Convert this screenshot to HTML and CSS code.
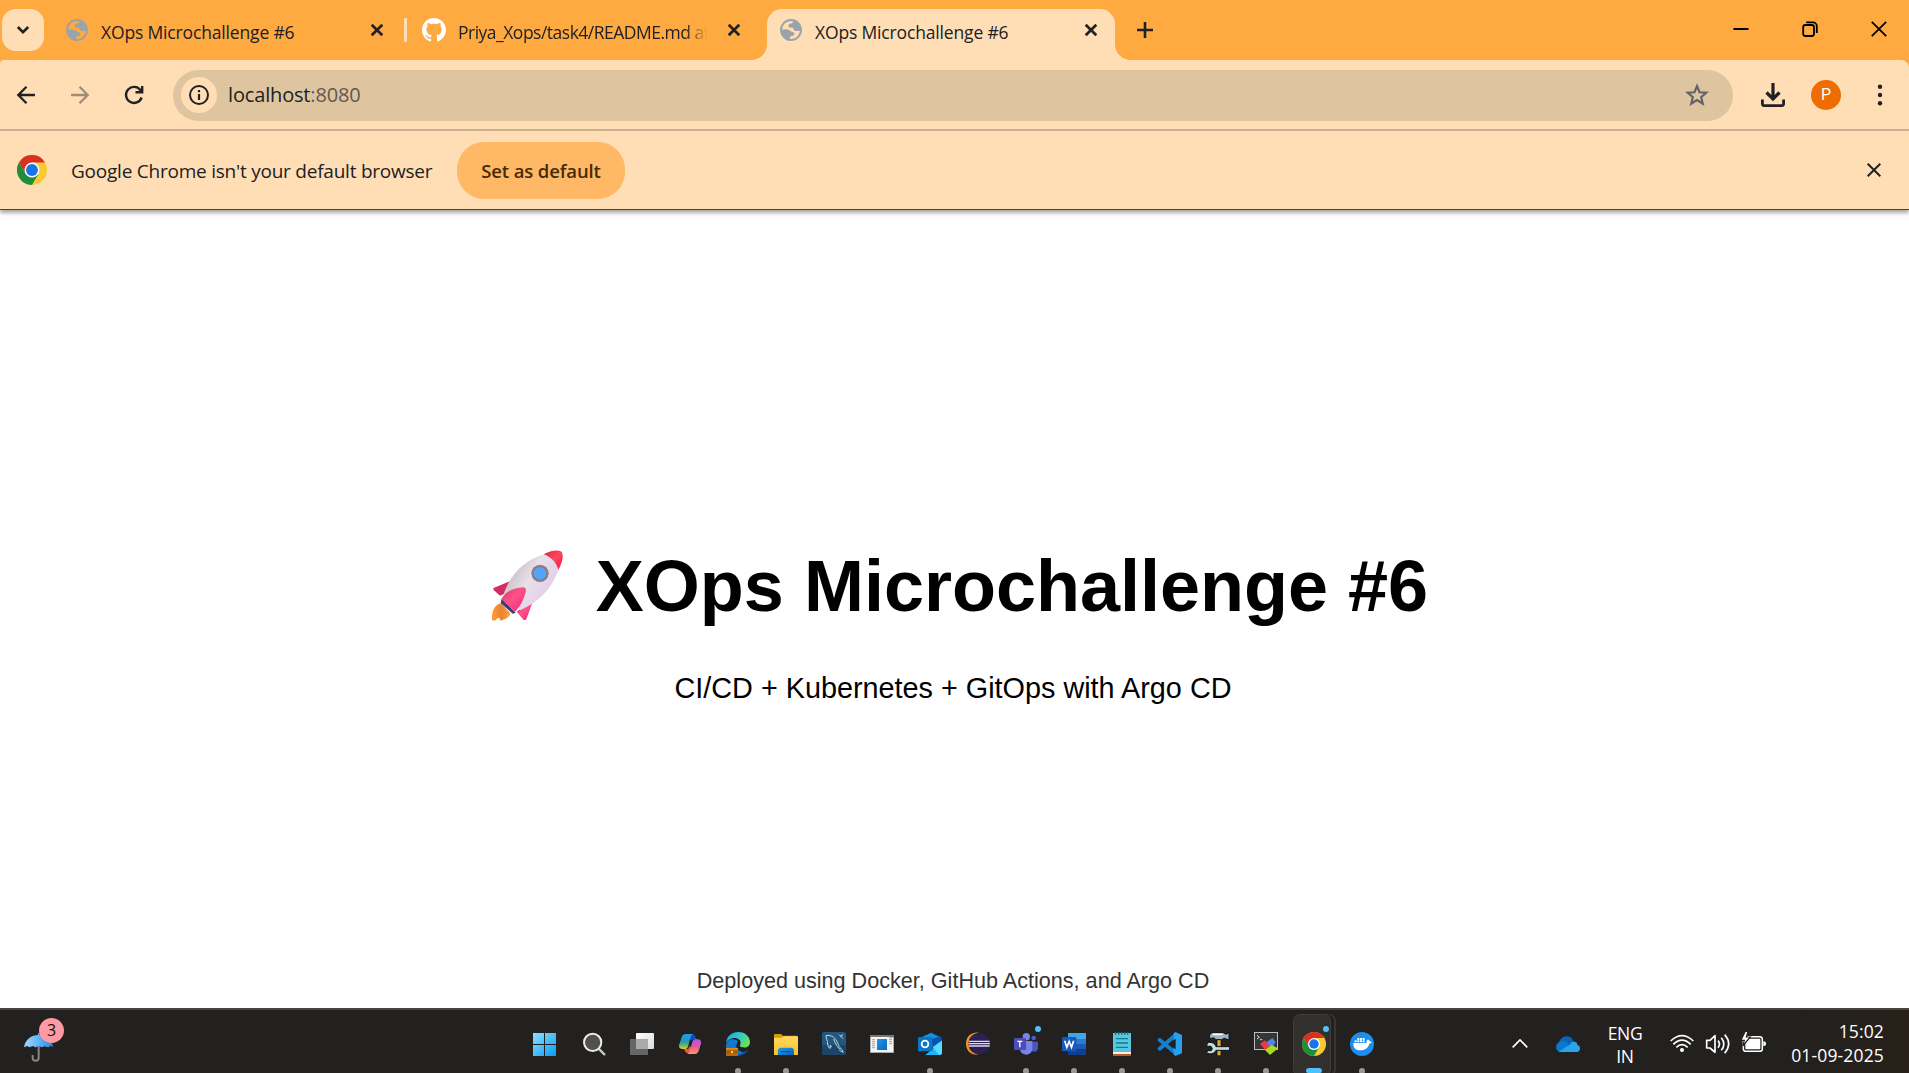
FILE: index.html
```html
<!DOCTYPE html>
<html lang="en">
<head>
<meta charset="utf-8">
<title>XOps Microchallenge #6</title>
<link rel="stylesheet" href="styles.css">
</head>
<body>
<svg class="defs" aria-hidden="true">
  <defs>
    <symbol id="globe" viewBox="117 54 72 72">
      <circle cx="153" cy="90" r="30" fill="none" stroke="#9aa3aa" stroke-width="5.5"/>
      <path fill="#9aa3aa" d="M161 61C160 69 156 71 148 72C144 74 145 82 149 83C155 82 158 82 160 86C162 90 165 93 171 93L184 92A31 31 0 0 0 161 61ZM122 89L139 88C146 88 149 94 155 95C162 95 165 101 162 105C159 109 151 107 150 112V122A32 32 0 0 1 122 89Z"/>
    </symbol>
    <symbol id="close" viewBox="0 0 24 24"><path d="M6.7 6.7L17.3 17.3M17.3 6.7L6.7 17.3" fill="none" stroke="#202124" stroke-width="2.7"/></symbol>
    <symbol id="chrome" viewBox="0 0 72 72">
      <circle cx="36" cy="36" r="36" fill="#fbc934"/>
      <path fill="#d93025" d="M4.8 18A36 36 0 0 1 67.2 18H36L20.4 45Z"/>
      <path fill="#1e8e3e" d="M4.8 18A36 36 0 0 0 36 72L51.6 45L36 54L20.4 45Z"/>
      <circle cx="36" cy="36" r="18" fill="#fff"/>
      <circle cx="36" cy="36" r="14.3" fill="#1a73e8"/>
    </symbol>
    <linearGradient id="win" x1="0" y1="0" x2="1" y2="1"><stop stop-color="#8be0ff"/><stop offset="1" stop-color="#0a9bf5"/></linearGradient>
    <linearGradient id="paper" x1="0" y1="0" x2="1" y2="1"><stop stop-color="#fff"/><stop offset="1" stop-color="#d8dadd"/></linearGradient>
    <linearGradient id="copA" x1="0" y1="0" x2="0" y2="1"><stop stop-color="#1b9df0"/><stop offset=".5" stop-color="#2599b8"/><stop offset=".75" stop-color="#62b55d"/><stop offset="1" stop-color="#f4cf20"/></linearGradient>
    <linearGradient id="copB" x1="0" y1="0" x2="0" y2="1"><stop stop-color="#a957f0"/><stop offset=".5" stop-color="#e9579b"/><stop offset="1" stop-color="#ff9b55"/></linearGradient>
    <linearGradient id="edge" x1="0" y1="0" x2="1" y2=".5"><stop stop-color="#2098dc"/><stop offset=".5" stop-color="#2bc5d6"/><stop offset="1" stop-color="#65e25a"/></linearGradient>
    <linearGradient id="folder" x1="0" y1="0" x2="0" y2="1"><stop stop-color="#ffda5c"/><stop offset="1" stop-color="#f7bf2b"/></linearGradient>
    <linearGradient id="blue" x1="0" y1="0" x2="1" y2="1"><stop stop-color="#1b9ae8"/><stop offset="1" stop-color="#0b66bd"/></linearGradient>
    <linearGradient id="brolly" x1="0" y1="0" x2="1" y2="0"><stop stop-color="#a5d5fb"/><stop offset=".5" stop-color="#62b4f6"/><stop offset="1" stop-color="#2088e4"/></linearGradient>
    <linearGradient id="hull" x1="0" y1=".2" x2="1" y2=".8"><stop stop-color="#b9b2b6"/><stop offset=".45" stop-color="#e9e0ea"/><stop offset="1" stop-color="#dfc8ea"/></linearGradient>
    <linearGradient id="fin" x1="0" y1="0" x2="1" y2="1"><stop stop-color="#d93466"/><stop offset=".45" stop-color="#ff5288"/><stop offset="1" stop-color="#f3257b"/></linearGradient>
    <linearGradient id="nose" x1="0" y1="0" x2="1" y2="1"><stop stop-color="#df1f3f"/><stop offset=".5" stop-color="#ff4661"/><stop offset="1" stop-color="#ed1540"/></linearGradient>
    <linearGradient id="flame" x1="0" y1="0" x2="1" y2="0"><stop stop-color="#ff9a3c"/><stop offset=".5" stop-color="#e9852d"/><stop offset="1" stop-color="#ffa04b"/></linearGradient>
  </defs>
</svg>

<header class="tabstrip">
  <div class="tab-search"><svg width="16" height="16" viewBox="0 0 16 16"><path d="M2.8 5L8 10.2L13.2 5" fill="none" stroke="#202124" stroke-width="2.6"/></svg></div>
  <div class="tab">
    <svg class="ico24"><use href="#globe"/></svg><span class="title">XOps Microchallenge #6</span><svg class="ico24"><use href="#close"/></svg>
  </div>
  <div class="sep"></div>
  <div class="tab">
    <svg class="ico24" viewBox="0 0 16 16"><path fill="#fff" d="M8 0C3.58 0 0 3.58 0 8c0 3.54 2.29 6.53 5.47 7.59.4.07.55-.17.55-.38 0-.19-.01-.82-.01-1.49-2.01.37-2.53-.49-2.69-.94-.09-.23-.48-.94-.82-1.13-.28-.15-.68-.52-.01-.53.63-.01 1.08.58 1.23.82.72 1.21 1.87.87 2.33.66.07-.52.28-.87.51-1.07-1.78-.2-3.64-.89-3.64-3.95 0-.87.31-1.59.82-2.15-.08-.2-.36-1.02.08-2.12 0 0 .67-.21 2.2.82.64-.18 1.32-.27 2-.27s1.36.09 2 .27c1.53-1.04 2.2-.82 2.2-.82.44 1.1.16 1.92.08 2.12.51.56.82 1.27.82 2.15 0 3.07-1.87 3.75-3.65 3.95.29.25.54.73.54 1.48 0 1.07-.01 1.93-.01 2.2 0 .21.15.46.55.38A8.01 8.01 0 0 0 16 8c0-4.42-3.58-8-8-8z"/></svg><span class="title fade">Priya_Xops/task4/README.md at</span><svg class="ico24"><use href="#close"/></svg>
  </div>
  <div class="tab active">
    <svg class="ico24"><use href="#globe"/></svg><span class="title">XOps Microchallenge #6</span><svg class="ico24"><use href="#close"/></svg>
  </div>
  <svg class="newtab" width="16" height="16" viewBox="0 0 16 16"><path d="M8 0V16M0 8H16" stroke="#202124" stroke-width="2.6"/></svg>
  <div class="window-controls">
    <svg width="16" height="16" viewBox="0 0 16 16"><path d="M.5 8H15.5" stroke="#000" stroke-width="2"/></svg>
    <svg width="16" height="16" viewBox="0 0 16 16" fill="none" stroke="#000" stroke-width="1.8"><rect x="1.2" y="4" width="10.8" height="11" rx="2.2"/><path d="M4.2 1.4H11A3.8 3.8 0 0 1 14.8 5.2V12"/></svg>
    <svg width="16" height="16" viewBox="0 0 16 16"><path d="M.8 .8L15.2 15.2M15.2 .8L.8 15.2" stroke="#000" stroke-width="1.8"/></svg>
  </div>
</header>

<nav class="toolbar">
  <div class="nav-buttons">
    <svg width="20" height="20" viewBox="0 0 20 20" fill="none" stroke="#202124" stroke-width="2.3"><path d="M19 10H3M10.5 1.8L2.3 10L10.5 18.2"/></svg>
    <svg width="20" height="20" viewBox="0 0 20 20" fill="none" stroke="#9f8c77" stroke-width="2.3"><path d="M1 10H17M9.500 1.8L17.700 10L9.500 18.2"/></svg>
    <svg width="20" height="20" viewBox="0 0 20 20" fill="none" stroke="#202124" stroke-width="2.4"><path d="M17.600 12.500A8 8 0 1 1 16.500 5.200L18 7M18.200 1V7.300H11.500"/></svg>
  </div>
  <div class="omnibox">
    <div class="site-info"><svg width="20" height="20" viewBox="0 0 20 20"><circle cx="10" cy="10" r="9" fill="none" stroke="#202124" stroke-width="2"/><path d="M10 9V15M10 5V7.200" stroke="#202124" stroke-width="2.200"/></svg></div>
    <div class="url">localhost<span>:8080</span></div>
    <svg width="24" height="24" viewBox="0 0 24 24"><path d="M12 3L14.500 9.200L21.300 9.700L16.100 14.100L17.800 20.700L12 17.100L6.200 20.700L7.900 14.100L2.700 9.700L9.500 9.200Z" fill="none" stroke="#5f6368" stroke-width="2.100"/></svg>
  </div>
  <svg class="download" width="24" height="24" viewBox="0 0 24 24" fill="none" stroke="#202124" stroke-width="2.800"><path d="M12 0V16M5.500 9.500L12 16L18.500 9.500" stroke-width="3.200"/><path d="M1.400 16.500V21A1.700 1.700 0 0 0 3 22.600H21A1.700 1.700 0 0 0 22.600 21V16.500"/></svg>
  <div class="avatar">P</div>
  <svg class="menu" width="6" height="24" viewBox="0 0 6 24" fill="#202124"><circle cx="3" cy="3.800" r="2.200"/><circle cx="3" cy="12" r="2.200"/><circle cx="3" cy="20.200" r="2.200"/></svg>
</nav>

<div class="infobar">
  <svg class="logo"><use href="#chrome"/></svg>
  <span class="info-text">Google Chrome isn't your default browser</span>
  <span class="default-btn">Set as default</span>
  <svg class="dismiss" width="14" height="14" viewBox="0 0 14 14"><path d="M.7 .7L13.300 13.300M13.300 .7L.7 13.300" stroke="#202124" stroke-width="2"/></svg>
</div>

<main class="page">
  <h1><svg class="rocket" viewBox="27 50 294 240">
    <path fill="url(#flame)" d="M94 219C76 222 64 240 66 269L74 271L83 263L90 264L91 271C107 267 119 261 121 249Z"/>
    <path fill="#3c3c74" d="M95 205L137 247L128 250L92 218Z"/>
    <path fill="#d32e62" d="M119 153L69 174L72 180L90 196L104 190Z"/>
    <path fill="url(#fin)" d="M187 218L168 269L161 269L140 244L155 232Z"/>
    <path fill="url(#hull)" d="M223 72C165 90 125 126 101 191L126 210L151 240C208 214 245 178 266 117C262 96 246 79 223 72Z"/>
    <path fill="url(#nose)" d="M221 72C240 62 260 57 275 64C282 76 277 97 265 118C258 95 243 80 221 72Z"/>
    <circle cx="210" cy="129" r="26" fill="#8a7c8d"/><circle cx="210" cy="129" r="18.500" fill="#52a5fb"/>
    <path fill="url(#fin)" d="M94 206C106 184 128 174 160 171C167 172 169 177 167 185C161 209 151 228 135 245Z"/>
  </svg> XOps Microchallenge #6</h1>
  <p class="sub">CI/CD + Kubernetes + GitOps with Argo CD</p>
  <footer>Deployed using Docker, GitHub Actions, and Argo CD</footer>
</main>

<div class="taskbar">
  <div class="weather">
    <svg width="32" height="32" viewBox="69 219 96 96"><path d="M116 258V293A9 9 0 0 1 98 293V285" fill="none" stroke="#858585" stroke-width="6"/><path d="M116 219V228" stroke="#62b4f6" stroke-width="4"/><path fill="url(#brolly)" d="M72 262C76 238 94 225 116 225C139 225 154 239 160 262L152 257L145 262L133 259L126 262L116 258L107 262L98 258L89 262L81 258Z"/></svg>
    <span class="badge">3</span>
  </div>
  <div class="apps">
    <div class="app"><svg viewBox="72 96 72 72"><g fill="url(#win)"><path d="M69 99H102V132H69ZM105 99H138V132H105ZM69 135H102V168H69ZM105 135H138V168H105Z"/></g></svg></div>
    <div class="app"><svg viewBox="216 96 72 72"><path d="M268 148L283 163" stroke="#c8c8c8" stroke-width="7" stroke-linecap="round"/><circle cx="248" cy="127" r="26" fill="#51504f" stroke="#ececec" stroke-width="6"/></svg></div>
    <div class="app"><svg viewBox="360 96 72 72"><rect x="360" y="117" width="54" height="48" rx="3" fill="#666"/><rect x="378" y="99" width="54" height="48" rx="3" fill="url(#paper)"/><rect x="378" y="117" width="36" height="30" fill="#aaa"/></svg></div>
    <div class="app"><svg viewBox="504 96 72 72"><path fill="#1246bd" d="M532 102H548Q554 103 557 112L562 121H542Z"/><path fill="url(#copA)" d="M527 102H549Q543 105 541 114L534 140Q532 147 525 147H516Q506 146 507 136L516 109Q519 102 527 102Z"/><path fill="#e55a39" d="M522 147H534Q536 144 538 139L548 145L534 161Q529 160 525 154Z"/><path fill="url(#copB)" d="M556 118H565Q575 120 573 131L565 155Q562 162 554 162H533Q538 157 540 149L547 126Q549 118 556 118Z"/></svg></div>
    <div class="app run"><svg viewBox="648 96 72 72"><path fill="#0c4f91" d="M684 126C674 139 684 157 700 156L716 149C706 165 688 171 669 166C650 158 646 139 652 126Z"/><path fill="#1179d0" d="M649 133C650 117 674 112 684 125L677 136C678 150 690 155 700 157C678 176 641 158 649 133Z"/><path fill="url(#edge)" d="M648 130C650 108 665 96 685 96C707 96 720 111 720 126C720 139 710 144 697 142C690 141 688 138 691 133C695 119 682 112 671 114C658 116 650 122 648 130Z"/><rect x="648" y="144" width="36" height="24" fill="#b86710"/><path d="M648 144H684V149H648Z" fill="#df8c17"/><path d="M648 156H684" stroke="#754009" stroke-width="2"/><rect x="663" y="153" width="6" height="6" fill="#ffd34d"/></svg></div>
    <div class="app run"><svg viewBox="792 96 72 72"><path fill="#db9800" d="M792 105Q792 102 795 102H813L819 107H861V120H792Z"/><path fill="url(#folder)" d="M792 113H815L822 109H864V165H792Z"/><path fill="url(#blue)" d="M804 165V151Q805 143 813 143H844Q852 144 852 151V165Z"/><path d="M813 155H843" stroke="#075091" stroke-width="3"/></svg></div>
    <div class="app"><svg viewBox="66 96 72 72"><rect x="66" y="96" width="72" height="69" rx="6" fill="#22577f"/><path d="M66 135H138V159Q138 165 132 165H72Q66 165 66 159Z" fill="#1b4568"/><path d="M78 107C95 104 107 113 113 130C117 144 125 144 130 157L118 151M78 107C78 118 83 120 83 132C84 140 87 145 91 145L90 136L96 141M101 117C107 132 111 143 121 148M118 104L124 111L130 116M121 109L129 104" fill="none" stroke="#d9e5ed" stroke-width="2.600"/></svg></div>
    <div class="app"><svg viewBox="210 96 72 72"><rect x="211.500" y="106.500" width="69" height="51" fill="#f5f5f5" stroke="#aaa" stroke-width="3"/><path d="M210 108H282" stroke="#777" stroke-width="6"/><rect x="231" y="117" width="30" height="33" fill="url(#blue)"/><path d="M216 119H225M216 125H225M216 131H225M216 137H225M216 143H225M267 119H276M267 125H276M267 131H276M267 113H278" stroke="#777" stroke-width="2"/></svg></div>
    <div class="app run"><svg viewBox="354 96 72 72"><path fill="#1591dd" d="M366 111L393 98L420 111V140H366Z"/><path fill="#0b4faf" d="M386 120L423 108L426 120L399 140Z"/><path fill="#20b6f6" d="M426 120V160Q425 165 420 165H376L400 145Z"/><path fill="#57dcff" d="M398 142L426 122V160Q424 165 418 165Z"/><rect x="354" y="111" width="43" height="43" rx="3" fill="#0875c9"/><circle cx="375" cy="132" r="10" fill="none" stroke="#fff" stroke-width="5.500"/></svg></div>
    <div class="app"><svg viewBox="498 96 72 72"><path d="M536 98C511 96 498 112 498 131C498 151 512 166 536 164C520 158 508 148 508 131C508 114 520 102 536 98Z" fill="#f5921e"/><circle cx="537" cy="131" r="32" fill="#2d2055"/><path d="M506 124H569M505 131H570M506 138H569" stroke="#ddd9e8" stroke-width="4"/></svg></div>
    <div class="app run"><svg viewBox="642 96 72 72"><circle cx="679" cy="110" r="11" fill="#7b83eb"/><circle cx="701" cy="114" r="7" fill="#5059c9"/><path fill="#4b53bc" d="M690 125H714V146Q711 157 697 155Z"/><path fill="#7b83eb" d="M660 123H697V148Q694 164 678 164Q663 162 660 150Z"/><rect x="642" y="114" width="36" height="36" rx="3" fill="#4b4fb5"/><path d="M652 124H667M659.500 124V142" stroke="#fff" stroke-width="4"/></svg><i class="notice"></i></div>
    <div class="app run"><svg viewBox="786 96 72 72"><path fill="#41a5ee" d="M804 99H858V117H804Z"/><path fill="#2b7cd3" d="M804 117H858V132H804Z"/><path fill="#185abd" d="M804 132H858V148H804Z"/><path fill="#103f91" d="M804 148H858V165H804Z"/><rect x="786" y="111" width="43" height="43" rx="3" fill="#1859b8"/><path d="M794 122L800.500 142L807.500 124L814.500 142L821 122" fill="none" stroke="#fff" stroke-width="5"/></svg></div>
    <div class="app run"><svg viewBox="60 96 72 72"><rect x="69" y="99" width="54" height="64" fill="#58c7de"/><path d="M69 156H123V163H69Z" fill="#f4eee8"/><path d="M69 162H123V168H69Z" fill="#b95a2d"/><path d="M77 96V104M86 96V104M95 96V104M104 96V104M113 96V104" stroke="#106d83" stroke-width="4"/><path d="M78 116H114M78 129H114M78 142H114" stroke="#137993" stroke-width="4"/></svg></div>
    <div class="app run"><svg viewBox="204 96 72 72"><path d="M209 146L257 105M209 120L257 159" stroke="#147fca" stroke-width="12" stroke-linecap="round"/><path fill="#28a0ec" d="M256 96L276 105V160L256 168L251 163V100Z"/><path fill="#22211f" d="M257 116L237 132L257 148Z"/></svg></div>
    <div class="app run"><svg viewBox="348 96 72 72"><path d="M387 116V168" stroke="#111" stroke-width="17"/><path d="M387 119V166" stroke="#d8a735" stroke-width="10"/><path d="M358 105L366 98H400L408 103L417 98V120L403 115L395 119H378L371 113L360 117Z" fill="#9fb3c0" stroke="#111" stroke-width="3"/><path d="M352 129C362 124 374 129 378 140H419V151H378C373 161 360 165 350 158L353 152H364L367 146L363 139H350Z" fill="#c3dde4" stroke="#111" stroke-width="3"/><path d="M368 103H398" stroke="#fff" stroke-width="5"/></svg></div>
    <div class="app run"><svg viewBox="492 96 72 72"><rect x="493.500" y="97.500" width="69" height="51" fill="#343536" stroke="#bbb" stroke-width="3"/><path d="M501 106L508 112L501 117M510 119H517" fill="none" stroke="#fff" stroke-width="2.500"/><path fill="#e93945" d="M510 131L525 121L536 133L547 140L534 154L523 147Z"/><path fill="#4c87e8" d="M530 126L547 114L557 126L550 138L536 137Z"/><path fill="#aadb20" d="M525 150L545 135L564 145L540 165Z"/></svg></div>
    <div class="app current"><svg><use href="#chrome"/></svg><i class="notice"></i></div>
    <div class="app run"><svg viewBox="780 96 72 72"><circle cx="816" cy="132" r="36" fill="#1d8eee"/><path fill="#fff" d="M790 129H830C828 124 831 121 834 118C837 121 839 125 844 126C847 126 845 130 838 131C834 145 824 151 810 151C796 151 789 142 790 129ZM794 121H800V127H794ZM802 121H808V127H802ZM810 121H816V127H810ZM818 121H824V127H818ZM802 114H808V120H802ZM810 114H816V120H810ZM818 114H824V120H818Z"/></svg></div>
  </div>
  <div class="tray">
    <svg class="chev" width="24" height="24" viewBox="54 96 72 72"><path d="M68 142L90 120L112 142" fill="none" stroke="#fff" stroke-width="5"/></svg>
    <svg class="cloud" width="24" height="24" viewBox="198 96 72 72"><path fill="#0b62b8" d="M207 127C214 103 244 103 250 123L261 130L220 145Z"/><path fill="#0878d0" d="M212 156C193 155 194 127 213 125C220 121 228 124 233 130L249 156Z"/><path fill="#2aa5eb" d="M206 155L241 133C246 121 263 125 262 134C273 138 273 154 261 156H212Z"/></svg>
    <div class="lang">ENG<br>IN</div>
    <div class="status">
      <svg width="24" height="24" viewBox="540 96 72 72" fill="none" stroke="#fff" stroke-width="5"><path d="M542 123Q576 91 610 123M550 133Q576 108 602 133M559 142Q576 126 593 142"/><circle cx="576" cy="150" r="6" fill="#fff" stroke="none"/></svg>
      <svg width="24" height="24" viewBox="648 96 72 72" fill="none" stroke="#fff" stroke-width="5"><path d="M650 121H660L675 107V157L660 144H650Z" stroke-linejoin="round"/><path d="M684 122Q693 132 684 143M694 113Q709 132 694 151M704 104Q728 131 704 160"/></svg>
      <svg width="24" height="24" viewBox="756 96 72 72"><rect x="760" y="110" width="57" height="44" rx="8" fill="none" stroke="#fff" stroke-width="4.500"/><rect x="766" y="116" width="45" height="32" rx="3" fill="#fff"/><path d="M820 124Q828 124 828 131Q828 138 820 138Z" fill="#fff"/><path d="M766 94L753 121H763L758 138L781 111H769L774 94Z" fill="#fff" stroke="#22211f" stroke-width="3.500"/></svg>
    </div>
    <div class="clock">15:02<br>01-09-2025</div>
  </div>
</div>
</body>
</html>
```
FILE: styles.css
```css
* { box-sizing: border-box; }
body {
  margin: 0;
  width: 1909px;
  height: 1073px;
  overflow: hidden;
  display: flex;
  flex-direction: column;
  background: #ffaa40;
  color: #202124;
  font-family: "Open Sans", "Noto Sans", sans-serif;
}
svg { display: block; flex: none; overflow: visible; }
.defs { position: absolute; width: 0; height: 0; }
.ico24 { width: 24px; height: 24px; }

/* Tab strip */
.tabstrip { height: 60px; flex: none; display: flex; padding: 9px 0 0 2px; background: #ffaa40; }
.tab-search { width: 42px; height: 42px; margin-right: 9px; border-radius: 14px; background: #ffdeb5; display: flex; align-items: center; justify-content: center; }
.tab { width: 348px; height: 51px; padding: 0 12px 9px; display: flex; align-items: center; gap: 12px; }
.title { width: 252px; font-size: 17.5px; line-height: 24px; letter-spacing: -0.16px; white-space: nowrap; overflow: hidden; padding-top: 3px; }
.fade { letter-spacing: -0.5px; -webkit-mask-image: linear-gradient(90deg, #000 90%, transparent 99%); mask-image: linear-gradient(90deg, #000 90%, transparent 99%); }
.sep { width: 3px; height: 24px; margin: 9px 3px 0; background: #ffdeb5; border-radius: 1px; }
.active { position: relative; margin-left: 9px; background: #ffdeb5; border-radius: 15px 15px 0 0; }
.active::before, .active::after { content: ""; position: absolute; bottom: 0; width: 15px; height: 15px; }
.active::before { left: -15px; background: radial-gradient(circle at 0 0, transparent 14.5px, #ffdeb5 15px); }
.active::after { right: -15px; background: radial-gradient(circle at 100% 0, transparent 14.5px, #ffdeb5 15px); }
.newtab { margin: 13px 0 0 22px; }
.window-controls { margin-left: auto; padding: 12px 22px 0 0; display: flex; gap: 53px; }

/* Toolbar */
.toolbar { height: 71px; flex: none; display: flex; align-items: center; padding: 1px 26px 0 16px; border-bottom: 2px solid #ccb193; border-radius: 4px 8px 0 0; background: #ffdeb5; }
.nav-buttons { display: flex; gap: 34px; width: 157px; }
.omnibox { width: 1560px; height: 51px; border-radius: 26px; background: #dfc4a0; display: flex; align-items: center; padding: 0 24px 0 8px; }
.site-info { width: 36px; height: 36px; border-radius: 50%; background: #ffdeb5; display: flex; align-items: center; justify-content: center; }
.url { flex: 1; margin-left: 11px; font-size: 20px; letter-spacing: -0.16px; line-height: 28px; }
.url span { color: #5f5951; }
.download { margin-left: 28px; }
.avatar { width: 30px; height: 30px; margin-left: 26px; border-radius: 50%; background: #ef6c00; color: #fff; font: 16px/30px Roboto, sans-serif; text-align: center; }
.menu { margin-left: auto; }

/* Default browser notice */
.infobar { height: 79px; flex: none; display: flex; align-items: center; padding: 0 28px 0 17px; background: #ffdeb5; border-bottom: 1px solid #4b443d; position: relative; box-shadow: 0 3px 4px rgba(0,0,0,.35); }
.logo { width: 30px; height: 30px; }
.info-text { width: 386px; margin-left: 24px; font-size: 19px; letter-spacing: -0.23px; white-space: nowrap; padding-top: 2px; }
.default-btn { width: 168px; height: 57px; border-radius: 27px; background: #ffb866; color: #452b05; font-size: 18.500px; font-weight: 600; line-height: 58px; letter-spacing: -0.12px; text-align: center; }
.dismiss { margin-left: auto; }

/* Page */
.page { height: 798px; flex: none; padding-right: 3px; background: #fff; color: #000; text-align: center; font-family: "Liberation Sans", Arial, sans-serif; display: flex; flex-direction: column; align-items: center; }
.page h1 { margin: 335px 0 0; font-size: 72px; line-height: 83px; display: flex; align-items: center; white-space: nowrap; gap: 19px; }
.rocket { width: 98px; height: 80px; margin-left: 1px; }
.sub { margin: 43px 0 0; font-size: 28.800px; line-height: 34px; }
footer { margin-top: auto; padding-bottom: 14px; font-size: 21.600px; line-height: 26px; color: #333; }

/* Taskbar */
.taskbar { height: 65px; flex: none; border-top: 2px solid #444442; background: linear-gradient(90deg, #22211f 0 94%, #282019); color: #fff; display: flex; }
.weather { width: 522px; padding: 23px 0 0 23px; position: relative; }
.badge { position: absolute; left: 39px; top: 8px; width: 25px; height: 25px; border-radius: 50%; background: #ff99a4; color: #111; font-size: 16px; line-height: 24px; text-align: center; }
.apps { display: flex; }
.app { width: 48px; height: 63px; padding: 22px 12px 0; position: relative; }
.app svg { width: 24px; height: 24px; position: relative; }
.run::after { content: ""; position: absolute; left: 21px; bottom: -1px; width: 6px; height: 6px; border-radius: 50%; background: #9a9998; }
.notice { position: absolute; right: 9px; top: 16px; width: 6px; height: 6px; border-radius: 50%; background: #4cc2ff; }
.current::before { content: ""; position: absolute; left: 3px; top: 4px; width: 36px; height: 60px; border: 1px solid #403d3a; border-radius: 7px; background: #322f2c; box-shadow: 4px 0 0 -1px #22211f, 5px 0 0 #383532; }
.current::after { content: ""; position: absolute; left: 16px; bottom: 0; width: 16px; height: 5px; border-radius: 3px 3px 2px 2px; background: #4cc2ff; }
.tray { flex: 1; display: flex; padding-left: 122px; font-size: 17.500px; line-height: 23px; letter-spacing: -0.3px; }
.chev, .cloud, .status { margin-top: 22px; }
.cloud { margin-left: 24px; }
.lang { width: 90px; text-align: center; padding-top: 12px; }
.status { display: flex; gap: 12px; }
.clock { flex: 1; text-align: right; padding: 9px 25px 0 0; line-height: 24px; letter-spacing: 0.15px; }
```
